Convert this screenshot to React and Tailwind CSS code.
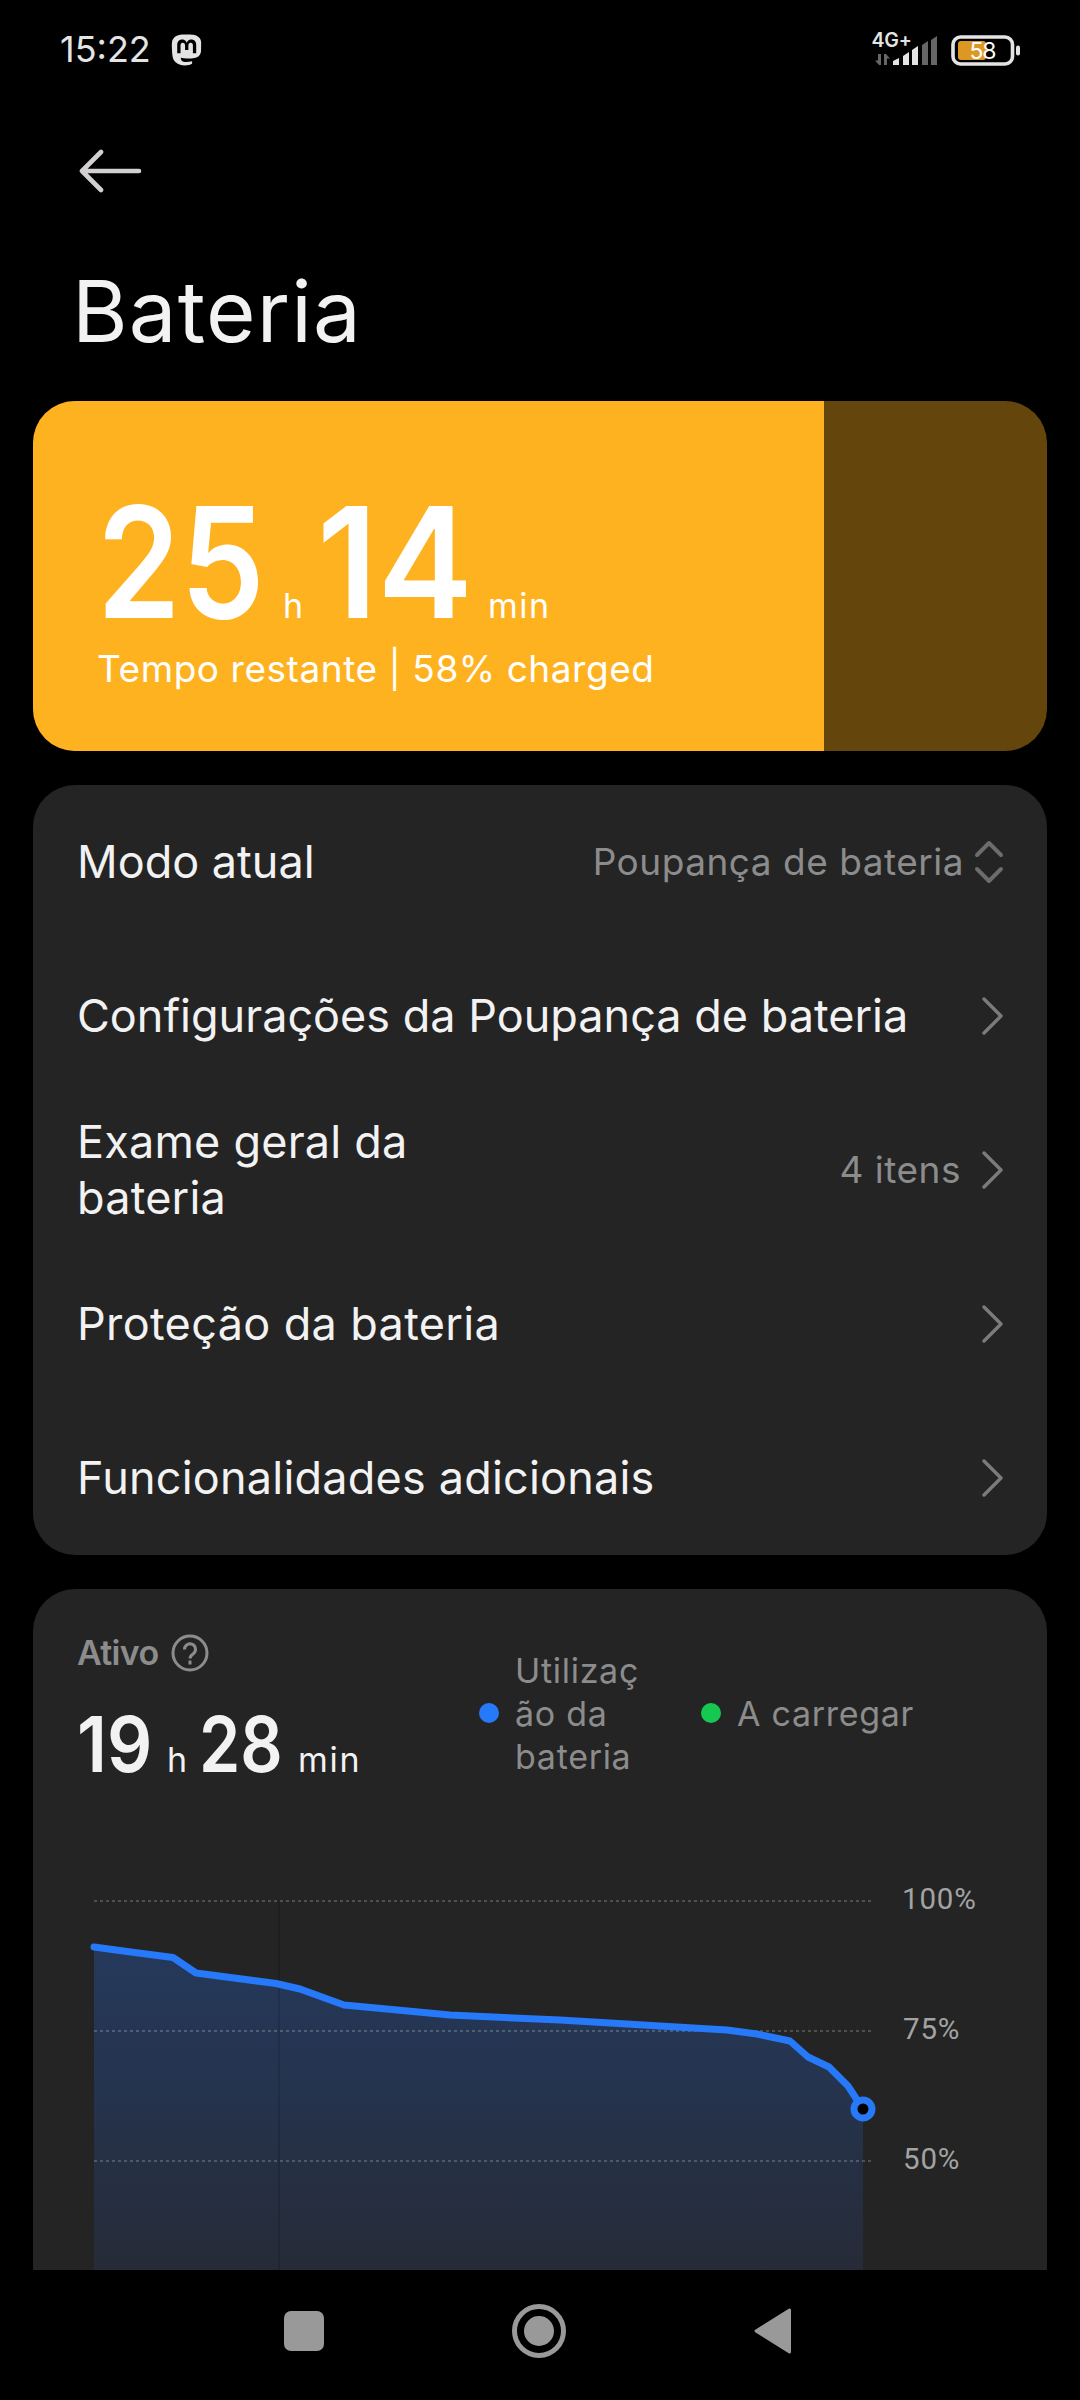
import { SiMastodon } from 'react-icons/si';

const menuItems = [
  { label: 'Modo atual', value: 'Poupança de bateria', type: 'select', tracking: 'tracking-normal' },
  { label: 'Configurações da Poupança de bateria', tracking: 'tracking-normal' },
  { label: 'Exame geral da bateria', value: '4 itens', tracking: 'w-[360px] tracking-[0.2px]' },
  { label: 'Proteção da bateria', tracking: 'tracking-[0.35px]' },
  { label: 'Funcionalidades adicionais', tracking: 'tracking-[0.2px]' },
];

const linePoints =
  '61,78 94,82.5 140,88.5 163,104 243,114.5 267,120 311,136 359,140.5 417,146 527,151 694,161 724,165 757,172 775,188 796,198 815,217 830,240';

function StatusBar() {
  return (
    <header className="flex h-[98px] items-center justify-between pl-[60px] pr-[60px] text-[#e4e4e4]">
      <div className="flex items-center">
        <span className="w-[111px] text-[36px] leading-none">15:22</span>
        <SiMastodon className="mt-[2px] h-[34px] w-[31px]" />
      </div>
      <div className="flex items-center">
        {/* Rede */}
        <svg className="h-[40px] w-[70px]" viewBox="0 0 70 40" fill="currentColor">
          <text x="0.5" y="17.500" fontSize="19.5" fontWeight="600" letterSpacing="-0.2">4G+</text>
          <g fill="#666">
            <path d="M7 25h3v11H8l-4-4.5h3zM13 25h2l4 4.5h-3V36h-3z" />
            <path d="M51 16l6-4v24h-6zM60 11l6-4v29h-6z" />
          </g>
          <path d="M22 32l6-3v7h-6zM32 27l6-4v13h-6zM41 21l6-4v19h-6z" />
        </svg>
        {/* Bateria */}
        <svg className="ml-[9px] h-[40px] w-[70px]" viewBox="0 0 70 40">
          <rect x="3" y="8" width="59.500" height="27" rx="7.5" fill="none" stroke="#e4e4e4" strokeWidth="3.6" />
          <rect x="8" y="12" width="28" height="19" rx="3" fill="#dd9823" />
          <rect x="66" y="16.500" width="4" height="10" rx="2" fill="#e4e4e4" />
          <text x="19.500" y="29.500" fontSize="23" fill="#fff" letterSpacing="-1.2">58</text>
        </svg>
      </div>
    </header>
  );
}

function Chevron() {
  return (
    <svg className="h-[40px] w-[22px]" viewBox="0 0 22 40" fill="none" stroke="#7b7b7b" strokeWidth="3.4" strokeLinecap="round" strokeLinejoin="round">
      <path d="M2 3l17 17L2 37" />
    </svg>
  );
}

function UpDown() {
  return (
    <svg className="ml-[10px] h-[44px] w-[30px]" viewBox="0 0 30 44" fill="none" stroke="#6c6c6c" strokeWidth="4" strokeLinecap="round" strokeLinejoin="round">
      <path d="M3 15L15 3l12 12M3 29l12 12 12-12" />
    </svg>
  );
}

function MenuRow({ item }) {
  return (
    <button className="flex h-[154px] w-full items-center justify-between pb-[1px] pl-[44px] pr-[43px] text-left">
      <span className={`text-[45px] leading-[56px] text-[#f2f2f2] ${item.tracking}`}>
        {item.label}
      </span>
      <span className="flex items-center text-[37px] leading-none tracking-[0.5px] text-[#8c8c8c]">
        <span className="-mt-[1px]">{item.value}</span>
        {item.type === 'select' ? (
          <UpDown />
        ) : (
          <span className="ml-[21px]">
            <Chevron />
          </span>
        )}
      </span>
    </button>
  );
}

function Chart() {
  return (
    <svg className="h-[401px] w-full" viewBox="0 0 1014 401">
      <defs>
        <linearGradient id="area" x1="0" y1="78" x2="0" y2="401" gradientUnits="userSpaceOnUse">
          <stop offset="0" stopColor="#25395b" />
          <stop offset="0.4" stopColor="#25344f" />
          <stop offset="1" stopColor="#262b37" />
        </linearGradient>
      </defs>
      <polygon points={`${linePoints} 830,401 61,401`} fill="url(#area)" />
      <path d="M246 32v369" stroke="#000" strokeOpacity="0.13" strokeWidth="2" />
      <path d="M61 32h778M61 162h778M61 292h778" stroke="#fff" strokeOpacity="0.2" strokeWidth="2" strokeDasharray="3 3" />
      <polyline points={linePoints} fill="none" stroke="#2679f8" strokeWidth="7" strokeLinecap="round" strokeLinejoin="round" />
      <circle cx="830" cy="240" r="9" fill="#000" stroke="#2679f8" strokeWidth="7" />
      <g className="font-[Roboto]" fontSize="29.5" fill="#a3a3a3" letterSpacing="0.8">
        <text x="869" y="40">100%</text>
        <text x="870" y="170">75%</text>
        <text x="870" y="300">50%</text>
      </g>
    </svg>
  );
}

export default function App() {
  return (
    <div className="flex h-[2400px] w-[1080px] flex-col overflow-hidden bg-black font-[Inter,sans-serif]">
      <StatusBar />

      <div className="flex h-[146px] items-center pl-[79px]">
        <svg className="h-[46px] w-[64px]" viewBox="0 0 64 46" fill="none" stroke="#d2d0d1" strokeWidth="4.6" strokeLinecap="round" strokeLinejoin="round">
          <path d="M22 4L3 23l19 19M3 23h57" />
        </svg>
      </div>

      <h1 className="h-[157px] pl-[72px] pt-[25px] text-[85px] leading-none tracking-[1.2px] text-[#f2f2f2]">Bateria</h1>

      {/* Tempo restante */}
      <section className="mx-[33px] flex h-[350px] shrink-0 overflow-hidden rounded-[42px] bg-[#64460d] text-white">
        <div className="w-[791px] bg-[#ffb220] pl-[64px] pt-[84px]">
          <div className="flex items-baseline text-[34px] leading-none">
            <span className="w-[186px] origin-left scale-x-[0.87] text-[154px] font-semibold">25</span>
            <span className="w-[34px]">h</span>
            <span className="w-[171px] origin-left scale-x-[0.93] text-[154px] font-semibold">14</span>
            <span className="tracking-[1.5px]">min</span>
          </div>
          <p className="mt-[11px] whitespace-nowrap text-[37px] leading-none tracking-[0.55px]">Tempo restante | 58% charged</p>
        </div>
      </section>

      <section className="mx-[33px] mt-[34px] shrink-0 rounded-[42px] bg-[#242424]">
        {menuItems.map((item) => (
          <MenuRow key={item.label} item={item} />
        ))}
      </section>

      {/* Gráfico de utilização */}
      <section className="mx-[33px] mt-[34px] h-[681px] shrink-0 rounded-t-[42px] bg-[#242424]">
        <div className="flex h-[280px]">
          <div className="w-[446px] pl-[44px] pt-[45px]">
            <div className="flex items-center text-[#8c8c8c]">
              <span className="w-[94px] text-[34px] font-semibold leading-none tracking-[-0.02em]">Ativo</span>
              <svg className="h-[38px] w-[38px]" viewBox="0 0 38 38" fill="none" stroke="currentColor" strokeWidth="3">
                <circle cx="19" cy="19" r="17" />
                <path d="M13.5 15.5a5.5 5.5 0 1 1 8.5 4.4c-2 1.400-3 2.200-3 4.600" />
                <path d="M19 26.500v4" />
              </svg>
            </div>
            <div className="mt-[34px] flex items-baseline text-[34px] leading-none text-[#f2f2f2]">
              <span className="w-[90px] origin-left scale-x-[0.92] text-[77px] font-semibold">19</span>
              <span className="w-[32px]">h</span>
              <span className="w-[99px] origin-left scale-x-[0.86] text-[77px] font-semibold">28</span>
              <span className="tracking-[1.8px]">min</span>
            </div>
          </div>
          <div className="flex h-[248px] items-center text-[34px] leading-[43px] tracking-[0.7px] text-[#8c8c8c]">
            <span className="mr-[16px] h-[20px] w-[20px] rounded-full bg-[#2679f8]" />
            <span className="w-[186px]">Utilizaç<br />ão da<br />bateria</span>
            <span className="mr-[16px] h-[20px] w-[20px] rounded-full bg-[#14c850]" />
            <span>A carregar</span>
          </div>
        </div>
        <Chart />
      </section>

      {/* Navegação */}
      <nav className="flex h-[130px] items-center pb-[8px] pl-[284px]">
        <span className="h-[40px] w-[40px] rounded-[7px] bg-[#999]" />
        <svg className="ml-[187px] h-[56px] w-[56px]" viewBox="0 0 56 56">
          <circle cx="28" cy="28" r="24.5" fill="none" stroke="#999" strokeWidth="5" />
          <circle cx="28" cy="28" r="15" fill="#999" />
        </svg>
        <svg className="ml-[186px] h-[46px] w-[39px]" viewBox="0 0 39 46" fill="#999" stroke="#999" strokeWidth="3" strokeLinejoin="round">
          <path d="M3 23L36.5 2v42z" />
        </svg>
      </nav>
    </div>
  );
}
